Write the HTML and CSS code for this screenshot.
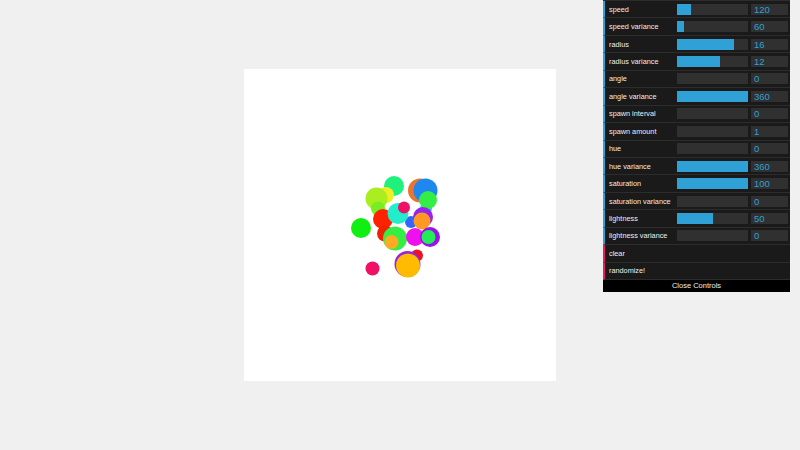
FILE: index.html
```html
<!DOCTYPE html>
<html>
<head>
<meta charset="utf-8">
<link rel="stylesheet" href="styles.css">
</head>
<body>
<main class="stage">
  <svg class="canvas" width="312" height="312" viewBox="0 0 312 312">
    <g transform="translate(-244 -69)">
      <circle cx="394" cy="186" r="10" fill="#1ef27c"/>
      <circle cx="420" cy="190.5" r="12" fill="#e8762e"/>
      <circle cx="425.5" cy="190.5" r="12" fill="#1e88f0"/>
      <circle cx="426" cy="208.5" r="6" fill="#22ccee"/>
      <circle cx="428" cy="200" r="9" fill="#33ee44"/>
      <circle cx="386" cy="195" r="8" fill="#eeee22"/>
      <circle cx="376.5" cy="198.5" r="11" fill="#aaee22"/>
      <circle cx="378" cy="208.5" r="7" fill="#77ee22"/>
      <circle cx="383" cy="219" r="10" fill="#ff2200"/>
      <circle cx="411" cy="222" r="6" fill="#3366ff"/>
      <circle cx="423" cy="217" r="10" fill="#9922ee"/>
      <circle cx="398" cy="213.5" r="10.5" fill="#22eecc"/>
      <circle cx="404" cy="207.5" r="6" fill="#ee1166"/>
      <circle cx="422" cy="221" r="8.5" fill="#ff9922"/>
      <circle cx="361" cy="228" r="10" fill="#11ee11"/>
      <circle cx="385" cy="233.5" r="8" fill="#ee2200"/>
      <circle cx="395" cy="238.5" r="12" fill="#33ee44"/>
      <circle cx="391.5" cy="242" r="7" fill="#ffaa22"/>
      <circle cx="415" cy="237" r="9" fill="#ee11ee"/>
      <circle cx="430" cy="237" r="10" fill="#9911ee"/>
      <circle cx="428.5" cy="237" r="7" fill="#22ee55"/>
      <circle cx="417" cy="255.5" r="6" fill="#ee1122"/>
      <circle cx="407.5" cy="264" r="13" fill="#9922dd"/>
      <circle cx="408" cy="265.5" r="12" fill="#ffbb00"/>
      <circle cx="372.5" cy="268.5" r="7" fill="#ee1166"/>
    </g>
  </svg>
</main>

<aside class="gui">
  <ul class="rows">
    <li class="cr number"><span class="label">speed</span><span class="slider"><span class="fill" style="width:20%"></span></span><span class="value">120</span></li>
    <li class="cr number"><span class="label">speed variance</span><span class="slider"><span class="fill" style="width:10%"></span></span><span class="value">60</span></li>
    <li class="cr number"><span class="label">radius</span><span class="slider"><span class="fill" style="width:80%"></span></span><span class="value">16</span></li>
    <li class="cr number"><span class="label">radius variance</span><span class="slider"><span class="fill" style="width:60%"></span></span><span class="value">12</span></li>
    <li class="cr number"><span class="label">angle</span><span class="slider"><span class="fill" style="width:0%"></span></span><span class="value">0</span></li>
    <li class="cr number"><span class="label">angle variance</span><span class="slider"><span class="fill" style="width:100%"></span></span><span class="value">360</span></li>
    <li class="cr number"><span class="label">spawn interval</span><span class="slider"><span class="fill" style="width:0%"></span></span><span class="value">0</span></li>
    <li class="cr number"><span class="label">spawn amount</span><span class="slider"><span class="fill" style="width:0%"></span></span><span class="value">1</span></li>
    <li class="cr number"><span class="label">hue</span><span class="slider"><span class="fill" style="width:0%"></span></span><span class="value">0</span></li>
    <li class="cr number"><span class="label">hue variance</span><span class="slider"><span class="fill" style="width:100%"></span></span><span class="value">360</span></li>
    <li class="cr number"><span class="label">saturation</span><span class="slider"><span class="fill" style="width:100%"></span></span><span class="value">100</span></li>
    <li class="cr number"><span class="label">saturation variance</span><span class="slider"><span class="fill" style="width:0%"></span></span><span class="value">0</span></li>
    <li class="cr number"><span class="label">lightness</span><span class="slider"><span class="fill" style="width:50%"></span></span><span class="value">50</span></li>
    <li class="cr number"><span class="label">lightness variance</span><span class="slider"><span class="fill" style="width:0%"></span></span><span class="value">0</span></li>
    <li class="cr function"><span class="label">clear</span></li>
    <li class="cr function"><span class="label">randomize!</span></li>
  </ul>
  <div class="close">Close Controls</div>
</aside>
</body>
</html>
```

FILE: styles.css
```css
html, body {
  margin: 0;
  padding: 0;
}
body {
  background: #f0f0f0;
  width: 800px;
  height: 450px;
  overflow: hidden;
  position: relative;
  font-family: "Liberation Sans", Arial, sans-serif;
}
.stage {
  width: 800px;
  height: 450px;
  display: flex;
  align-items: center;
  justify-content: center;
}
.canvas {
  display: block;
  background: #ffffff;
}
.gui {
  position: absolute;
  top: 0;
  right: 10px;
  width: 187px;
  background: #1a1a1a;
}
.rows {
  list-style: none;
  margin: 0;
  padding: 0;
  border-top: 1px solid #2c2c2c;
}
.cr {
  box-sizing: border-box;
  height: 17.45px;
  border-bottom: 1px solid #2c2c2c;
  display: flex;
  align-items: center;
  padding: 0 2px 0 4px;
  color: #eeeeee;
  font-size: 7.3px;
}
.cr.number {
  border-left: 2px solid #2fa1d6;
}
.cr.function {
  border-left: 2px solid #e61d5f;
}
.label {
  width: 68px;
  flex: none;
  white-space: nowrap;
  overflow: hidden;
}
.slider {
  width: 71px;
  height: 11px;
  flex: none;
  background: #303030;
  display: flex;
}
.fill {
  display: block;
  height: 100%;
  background: #2fa1d6;
}
.value {
  width: 37px;
  height: 11px;
  flex: none;
  margin-left: 3px;
  background: #303030;
  color: #2fa1d6;
  font-size: 9.5px;
  line-height: 12px;
  padding-left: 3px;
  box-sizing: border-box;
}
.close {
  height: 12px;
  background: #000000;
  color: #eeeeee;
  font-size: 7.5px;
  line-height: 12px;
  text-align: center;
}
```
